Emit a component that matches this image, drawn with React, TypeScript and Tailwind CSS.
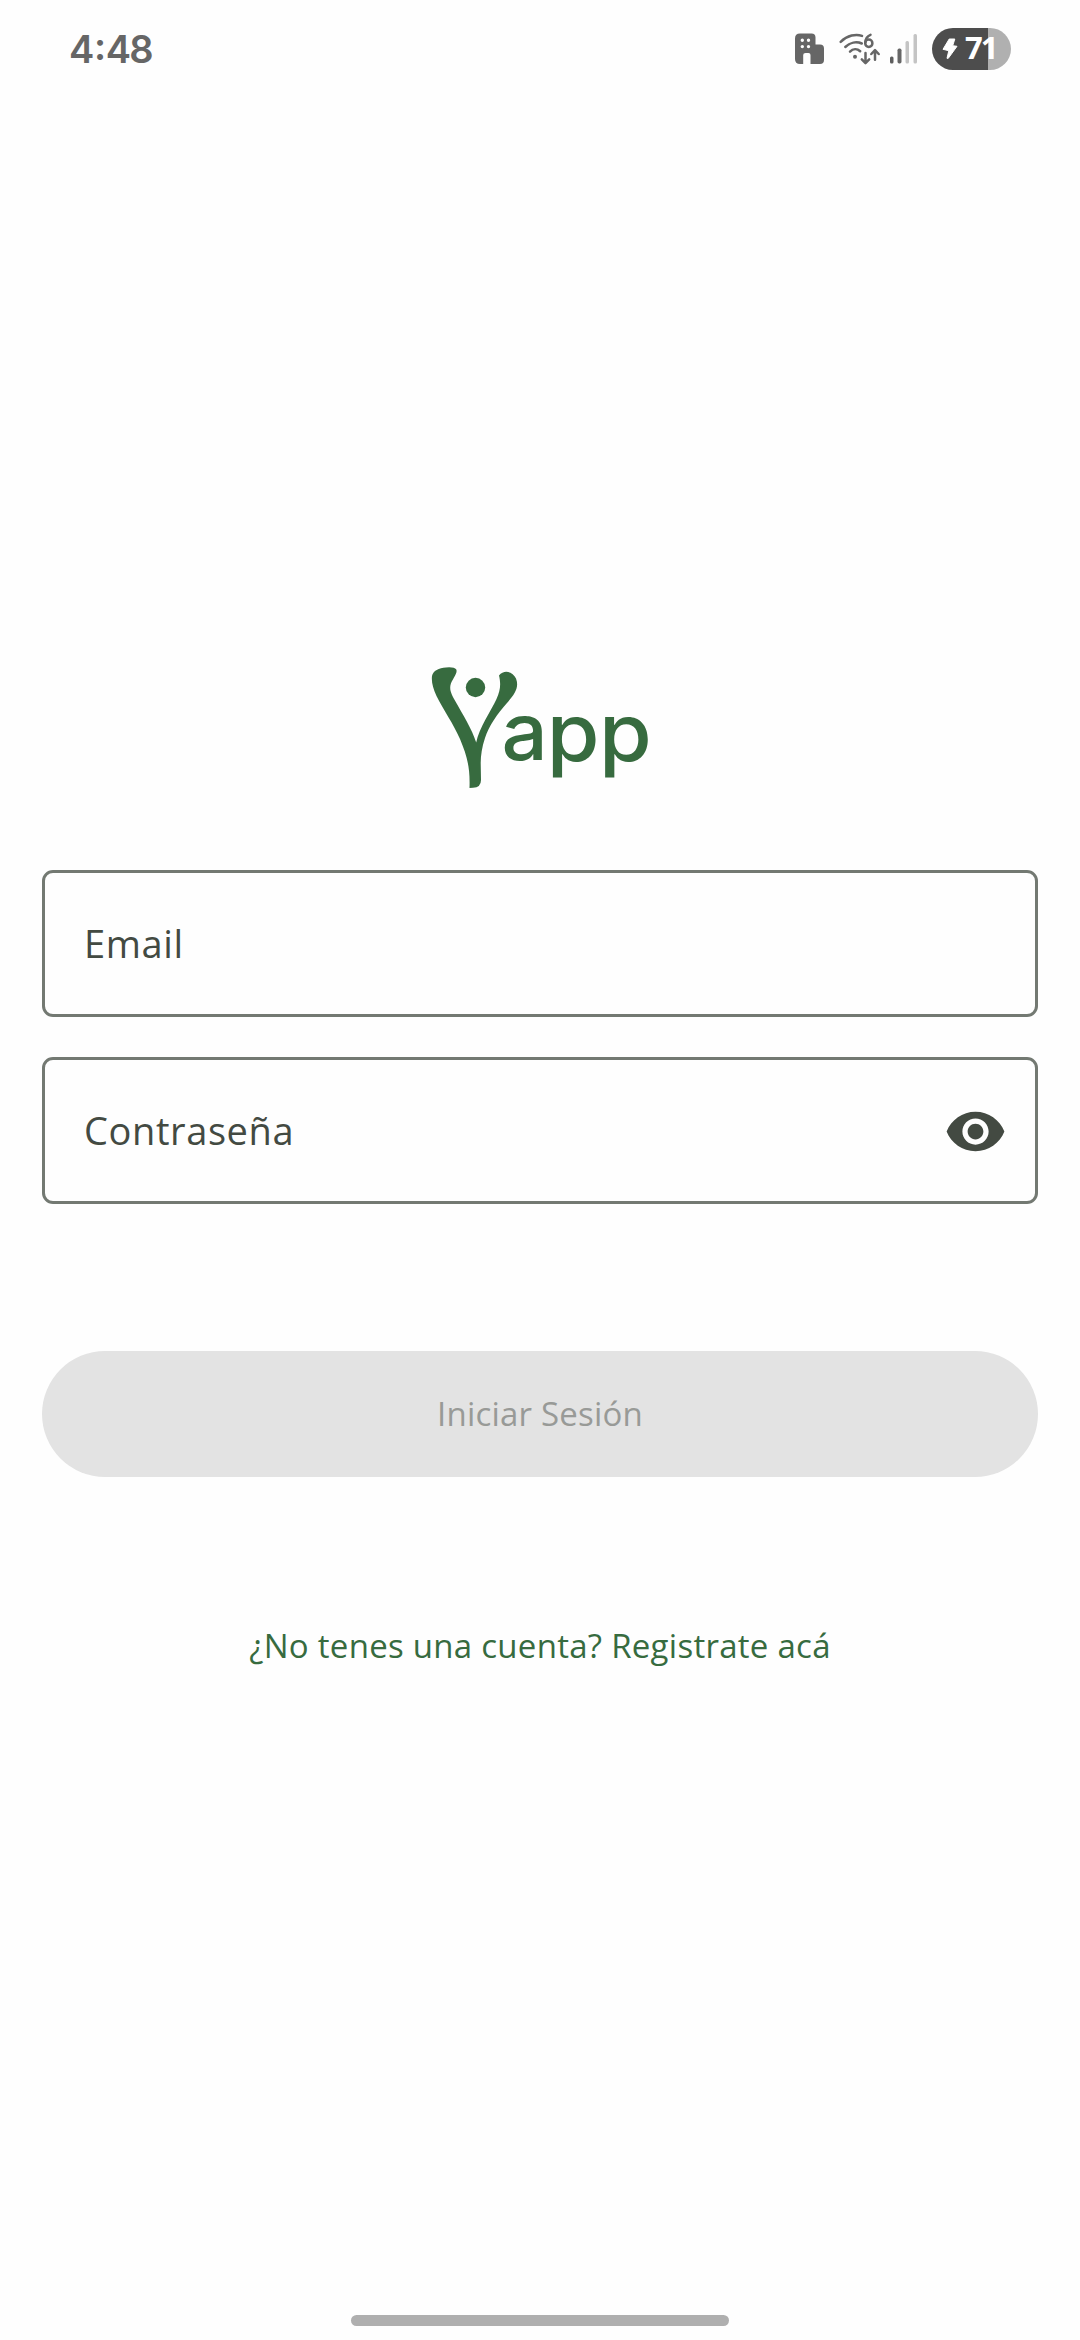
import React from "react";

function BuildingIcon() {
  return (
    <svg width="30" height="32" viewBox="0 0 30 32" className="block">
      <path
        fillRule="evenodd"
        fill="#666666"
        d="M5 .5H16.5Q20.5 .5 20.5 4.500V11.500H25Q29 11.500 29 15.500V27Q29 31 25 31H15.500V22Q15.500 20 13.500 20H10.500Q8.200 20 8.200 22V31H5Q0 31 0 26V5.500Q0 .5 5 .5ZM7.300 5.600a1.700 1.700 0 1 0 0 3.400a1.700 1.700 0 1 0 0-3.400ZM13.500 5.600a1.700 1.700 0 1 0 0 3.400a1.700 1.700 0 1 0 0-3.400ZM7.300 11.900a1.700 1.700 0 1 0 0 3.400a1.700 1.700 0 1 0 0-3.400ZM13.500 11.900a1.700 1.700 0 1 0 0 3.400a1.700 1.700 0 1 0 0-3.400Z"
      />
    </svg>
  );
}

function WifiIcon() {
  return (
    <svg width="42" height="32" viewBox="0 0 42 32" className="block">
      <g fill="none" stroke="#666666" strokeWidth="2.500" strokeLinecap="round" strokeLinejoin="round">
        <path d="M1.700 8.800C8.500 2.200 17 .8 23 2.900" />
        <path d="M6.300 14C11 9.400 17.500 8.200 22.800 10.500" />
        <path d="M11 18.600C14 15.600 18.200 15.600 21.200 18.200" />
        <path d="M26.500 20V29.600M22.800 26.400L26.500 30.200L30.200 26.400" />
        <path d="M36 26.800V17.500M32.300 21L36 17.200L39.700 21" />
        <ellipse cx="29.800" cy="10.200" rx="3.600" ry="3.700" />
        <path d="M26.300 9.500C26.500 5.500 28.500 3 31.500 1.800" />
      </g>
      <circle cx="16" cy="23.800" r="2" fill="#666666" />
    </svg>
  );
}

function SignalIcon() {
  return (
    <svg width="28" height="30" viewBox="0 0 28 30" className="block">
      <rect x="0" y="22.500" width="3.500" height="7" rx="1.500" fill="#5e5e5e" />
      <rect x="7.500" y="14.500" width="4" height="15" rx="1.700" fill="#666666" />
      <rect x="15.500" y="7" width="3.500" height="22.500" rx="1.500" fill="#c4c4c4" />
      <rect x="23.500" y="0" width="3.500" height="29.500" rx="1.500" fill="#c4c4c4" />
    </svg>
  );
}

function Battery() {
  return (
    <div className="flex h-[42px] w-[79px] items-center overflow-hidden rounded-full bg-[linear-gradient(90deg,#4d4d4d_56px,#b0b0b0_56px)] pl-[10px] text-white">
      <svg width="16" height="24" viewBox="0 0 16 24" className="block shrink-0">
        <path fill="#ffffff" stroke="#ffffff" strokeWidth="1" strokeLinejoin="round" d="M7.200 2H12.800L10.700 8.700L15 9.300L6.300 21.300H5L6.800 13.700L1 12.300Z" />
      </svg>
      <span className="mb-[3px] ml-[7px] font-['Open_Sans',sans-serif] text-[31px] leading-none font-bold tracking-[-2px]">71</span>
    </div>
  );
}

function Logo() {
  return (
    <svg width="220" height="125" viewBox="0 0 220 125" role="img" aria-label="Yapp" className="block overflow-visible" fill="#376b3f">
      <path d="M0 9C1 3.500 7 1 14 .4Q22 -.4 24.300 2.500C26 6.500 20 12 18.400 18.500C17.500 24 20 28 23.500 34.500C31 48 40 62 44.200 75.500C47 61 59 44 64.500 32C68.500 23 69 17 67 8.500C72 2 81 4.500 84 11.500C87.500 20.500 82.500 27.500 75 36C65 47.500 57 58.500 53 71C50 80 48.800 88 48.700 96L49 113Q49 120.500 41 120.700L37.500 121C38.200 100 35 89 28 72C21 56 12 44 4.500 29C1 21 -.7 15 0 9Z" />
      <circle cx="43.500" cy="20.500" r="9.700" />
      <g fontFamily="Inter, sans-serif" fontSize="79" fontWeight="500">
        <text transform="translate(69.500 93.300) scale(1.03 1)">a</text>
        <text transform="translate(114.800 93.500) scale(1.08 1.010)">p</text>
        <text transform="translate(167 93.500) scale(1.08 1.010)">p</text>
      </g>
    </svg>
  );
}

function EyeIcon() {
  return (
    <svg width="63" height="63" viewBox="0 0 24 24" className="mt-px block" fill="#434a42">
      <path d="M12 4.500C7 4.500 2.730 7.610 1 12c1.730 4.390 6 7.500 11 7.500s9.270-3.110 11-7.500c-1.730-4.390-6-7.500-11-7.500zM12 17c-2.760 0-5-2.240-5-5s2.240-5 5-5 5 2.240 5 5-2.240 5-5 5zm0-8c-1.660 0-3 1.340-3 3s1.340 3 3 3 3-1.340 3-3-1.340-3-3-3z" />
    </svg>
  );
}

function Field({ label, children }: { label: string; children?: React.ReactNode }) {
  return (
    <div className="flex h-[147px] items-center justify-between rounded-[11px] border-3 border-[#737972] pr-[28px] pl-[39px]">
      <span className="mb-[2px] text-[38px] leading-[54px] tracking-[0.6px] text-[#434a42]">{label}</span>
      {children}
    </div>
  );
}

export default function App() {
  return (
    <div className="flex h-[2340px] w-[1080px] flex-col bg-[#fefefe] font-['Open_Sans',sans-serif]">
      <header className="flex h-[98px] items-center px-[69px]">
        <div className="flex flex-1 font-['Inter',sans-serif] text-[38px] leading-none font-semibold tracking-[-1.800px] text-[#666666]">
          <span>4</span>
          <span className="mx-[1.500px] -mt-[3px]">:</span>
          <span>48</span>
        </div>
        <div className="flex items-center">
          <BuildingIcon />
          <div className="ml-[14px]"><WifiIcon /></div>
          <div className="ml-[9px]"><SignalIcon /></div>
          <div className="ml-[14px]"><Battery /></div>
        </div>
      </header>
      <main className="flex flex-col px-[42px] pt-[569px]">
        <div className="pl-[390px]"><Logo /></div>
        <div className="mt-[78px] flex flex-col gap-[40px]">
          <Field label="Email" />
          <Field label="Contraseña"><EyeIcon /></Field>
        </div>
        <button disabled className="mt-[147px] h-[126px] rounded-full bg-[#e3e3e3] text-[33px] tracking-[0.2px] text-[#989a97]">
          Iniciar Sesión
        </button>
        <a className="mt-[145px] text-center text-[33px] leading-[48px] tracking-[0.270px] text-[#376b3f]">
          ¿No tenes una cuenta? Registrate acá
        </a>
      </main>
      <div className="mt-auto mb-[14px] h-[11px] w-[378px] self-center rounded-full bg-[#afafaf]" />
    </div>
  );
}
